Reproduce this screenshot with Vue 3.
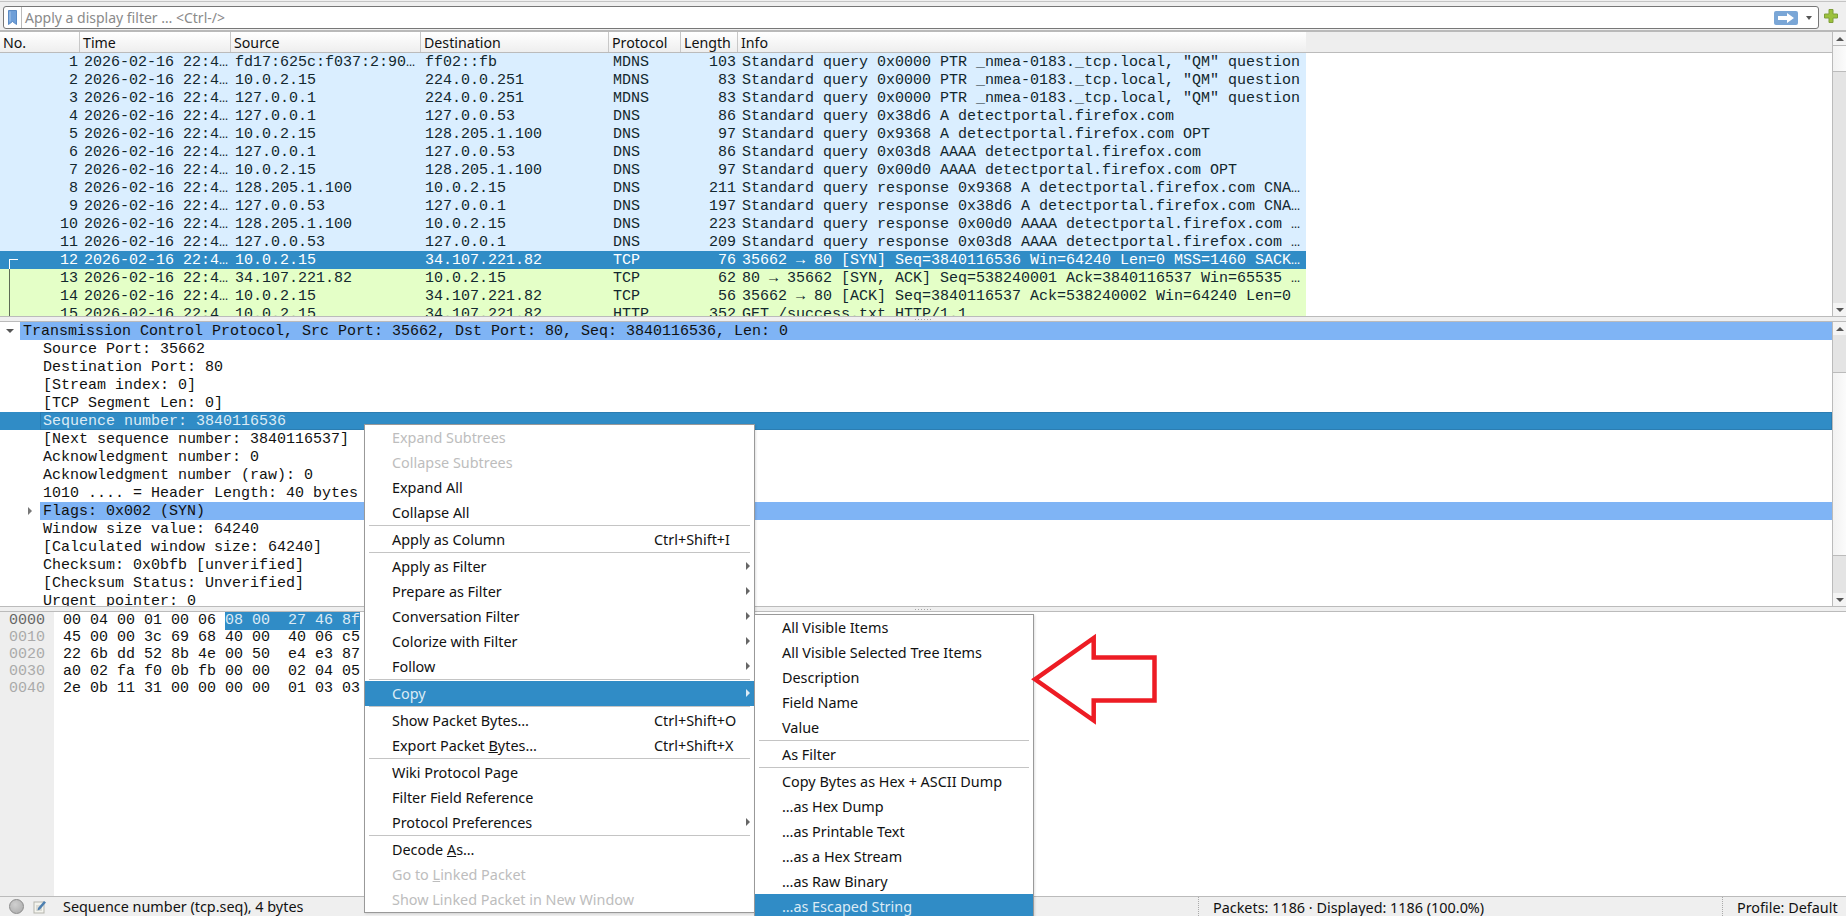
<template>
  <div class="app">
    <!-- filter bar -->
    <div class="filter-bar">
      <div class="filter-input">
        <svg class="bookmark" viewBox="0 0 9 15" width="9" height="15">
          <path d="M0.5 0.5h8v14l-4-3-4 3z" fill="#6f9fd8" stroke="#5a8ac4" stroke-width="1"/>
          <path d="M2 1.5v10" stroke="#a9c7ea" stroke-width="1"/>
        </svg>
        <span class="filter-sep"></span>
        <span class="placeholder">Apply a display filter … &lt;Ctrl-/&gt;</span>
        <span class="apply-btn">
          <svg viewBox="0 0 16 10" width="16" height="10">
            <path d="M0 3h9V0l7 5-7 5V7H0z" fill="#fff"/>
          </svg>
        </span>
        <span class="drop-arrow"></span>
      </div>
      <svg class="plus" viewBox="0 0 14 14" width="14" height="14">
        <path d="M5 .5h4v4.500h4.500v4H9v4.500H5V9H.5V5H5z" fill="#9cc13c" stroke="#7f9f3a" stroke-width="1"/>
      </svg>
    </div>

    <!-- packet list -->
    <div class="pane packets">
      <div class="pane-body">
        <div class="packet-head">
          <div class="head-cols">
            <div v-for="c in columns" :key="c" class="head-cell">{{ c }}</div>
          </div>
        </div>
        <div
          v-for="p in packets"
          :key="p.no"
          class="packet-row"
          :class="p.cls"
        >
          <div class="cell num">{{ p.no }}</div>
          <div class="cell">{{ time }}</div>
          <div class="cell">{{ p.src }}</div>
          <div class="cell">{{ p.dst }}</div>
          <div class="cell">{{ p.proto }}</div>
          <div class="cell len">{{ p.len }}</div>
          <div class="cell">{{ p.info }}</div>
        </div>
        <span class="conv-corner"></span>
        <span class="conv-line"></span>
      </div>
      <div class="scrollbar">
        <span class="sb-btn"><i class="tri-up"></i></span>
        <span class="sb-thumb thumb-top"></span>
        <span class="sb-trough"></span>
        <span class="sb-btn"><i class="tri-down"></i></span>
      </div>
    </div>

    <div class="splitter"><span class="grip"></span></div>

    <!-- packet details -->
    <div class="pane tree">
      <div class="pane-body">
        <div
          v-for="(r, i) in treeRows"
          :key="i"
          class="tree-row"
          :class="{ selected: r.selected }"
        >
          <span class="indent" :class="r.level ? 'lv1' : 'lv0'">
            <i v-if="r.open" class="twist-open"></i>
            <i v-if="r.closed" class="twist-closed"></i>
          </span>
          <span class="tree-label" :class="{ related: r.related }">{{ r.text }}</span>
        </div>
      </div>
      <div class="scrollbar">
        <span class="sb-btn"><i class="tri-up"></i></span>
        <span class="sb-trough short"></span>
        <span class="sb-thumb thumb-mid"></span>
        <span class="sb-trough short"></span>
        <span class="sb-btn"><i class="tri-down"></i></span>
      </div>
    </div>

    <div class="splitter"><span class="grip"></span></div>

    <!-- hex dump -->
    <div class="hex">
      <div class="hex-offsets">
        <div v-for="(h, i) in hexRows" :key="h.off" class="hex-off" :class="{ first: i === 0 }">{{ h.off }}</div>
      </div>
      <div class="hex-bytes">
        <div v-for="h in hexRows" :key="h.off" class="hex-line"><span>{{ h.a }}</span><span :class="{ 'hex-sel': h.sel }">{{ h.b }}</span></div>
      </div>
    </div>

    <!-- status bar -->
    <div class="statusbar">
      <span class="led"></span>
      <svg class="note" viewBox="0 0 14 15" width="14" height="15">
        <rect x="1" y="3" width="10" height="11" fill="#f4f4ee" stroke="#b5b5ad"/>
        <path d="M3 7h6M3 9h6M3 11h6" stroke="#c4c4bc"/>
        <path d="M5 9l6-7 2 1.500-6 7-2.500 1z" fill="#4d7fb0"/>
      </svg>
      <span class="status-text">Sequence number (tcp.seq), 4 bytes</span>
      <span class="status-stats">Packets: 1186 · Displayed: 1186 (100.0%)</span>
      <span class="status-profile">Profile: Default</span>
    </div>

    <!-- context menu -->
    <div class="menu main-menu">
      <template v-for="(m, i) in mainMenu" :key="i">
        <div v-if="m.sep" class="menu-sep"></div>
        <div v-else class="menu-item" :class="{ off: m.off, active: m.active }">
          <span class="menu-label">{{ m.t }}<u v-if="m.u">{{ m.u }}</u>{{ m.r }}</span>
          <span v-if="m.key" class="menu-key">{{ m.key }}</span>
          <i v-if="m.sub" class="menu-arrow"></i>
        </div>
      </template>
    </div>

    <div class="menu copy-menu">
      <template v-for="(m, i) in copyMenu" :key="i">
        <div v-if="m.sep" class="menu-sep"></div>
        <div v-else class="menu-item" :class="{ active: m.active }">
          <span class="menu-label">{{ m.t }}</span>
        </div>
      </template>
    </div>

    <!-- annotation -->
    <svg class="red-arrow" viewBox="0 0 132 94" width="132" height="94">
      <path d="M6 48.300L64.700 7V26.500H125.500V69.500H64.700V89.500z" fill="none" stroke="#ed1c24" stroke-width="4.500"/>
    </svg>
  </div>
</template>

<script setup>
const time = '2026-02-16 22:4…'
const columns = ['No.', 'Time', 'Source', 'Destination', 'Protocol', 'Length', 'Info']

const nmea = 'Standard query 0x0000 PTR _nmea-0183._tcp.local, "QM" question'

const packets = [
  { no: 1, src: 'fd17:625c:f037:2:90…', dst: 'ff02::fb', proto: 'MDNS', len: 103, info: nmea, cls: 'udp' },
  { no: 2, src: '10.0.2.15', dst: '224.0.0.251', proto: 'MDNS', len: 83, info: nmea, cls: 'udp' },
  { no: 3, src: '127.0.0.1', dst: '224.0.0.251', proto: 'MDNS', len: 83, info: nmea, cls: 'udp' },
  { no: 4, src: '127.0.0.1', dst: '127.0.0.53', proto: 'DNS', len: 86, info: 'Standard query 0x38d6 A detectportal.firefox.com', cls: 'udp' },
  { no: 5, src: '10.0.2.15', dst: '128.205.1.100', proto: 'DNS', len: 97, info: 'Standard query 0x9368 A detectportal.firefox.com OPT', cls: 'udp' },
  { no: 6, src: '127.0.0.1', dst: '127.0.0.53', proto: 'DNS', len: 86, info: 'Standard query 0x03d8 AAAA detectportal.firefox.com', cls: 'udp' },
  { no: 7, src: '10.0.2.15', dst: '128.205.1.100', proto: 'DNS', len: 97, info: 'Standard query 0x00d0 AAAA detectportal.firefox.com OPT', cls: 'udp' },
  { no: 8, src: '128.205.1.100', dst: '10.0.2.15', proto: 'DNS', len: 211, info: 'Standard query response 0x9368 A detectportal.firefox.com CNA…', cls: 'udp' },
  { no: 9, src: '127.0.0.53', dst: '127.0.0.1', proto: 'DNS', len: 197, info: 'Standard query response 0x38d6 A detectportal.firefox.com CNA…', cls: 'udp' },
  { no: 10, src: '128.205.1.100', dst: '10.0.2.15', proto: 'DNS', len: 223, info: 'Standard query response 0x00d0 AAAA detectportal.firefox.com …', cls: 'udp' },
  { no: 11, src: '127.0.0.53', dst: '127.0.0.1', proto: 'DNS', len: 209, info: 'Standard query response 0x03d8 AAAA detectportal.firefox.com …', cls: 'udp' },
  { no: 12, src: '10.0.2.15', dst: '34.107.221.82', proto: 'TCP', len: 76, info: '35662 → 80 [SYN] Seq=3840116536 Win=64240 Len=0 MSS=1460 SACK…', cls: 'sel' },
  { no: 13, src: '34.107.221.82', dst: '10.0.2.15', proto: 'TCP', len: 62, info: '80 → 35662 [SYN, ACK] Seq=538240001 Ack=3840116537 Win=65535 …', cls: 'http' },
  { no: 14, src: '10.0.2.15', dst: '34.107.221.82', proto: 'TCP', len: 56, info: '35662 → 80 [ACK] Seq=3840116537 Ack=538240002 Win=64240 Len=0', cls: 'http' },
  { no: 15, src: '10.0.2.15', dst: '34.107.221.82', proto: 'HTTP', len: 352, info: 'GET /success.txt HTTP/1.1', cls: 'http' }
]

const treeRows = [
  { level: 0, open: true, related: true, text: 'Transmission Control Protocol, Src Port: 35662, Dst Port: 80, Seq: 3840116536, Len: 0' },
  { level: 1, text: 'Source Port: 35662' },
  { level: 1, text: 'Destination Port: 80' },
  { level: 1, text: '[Stream index: 0]' },
  { level: 1, text: '[TCP Segment Len: 0]' },
  { level: 1, selected: true, text: 'Sequence number: 3840116536' },
  { level: 1, text: '[Next sequence number: 3840116537]' },
  { level: 1, text: 'Acknowledgment number: 0' },
  { level: 1, text: 'Acknowledgment number (raw): 0' },
  { level: 1, text: '1010 .... = Header Length: 40 bytes' },
  { level: 1, closed: true, related: true, text: 'Flags: 0x002 (SYN)' },
  { level: 1, text: 'Window size value: 64240' },
  { level: 1, text: '[Calculated window size: 64240]' },
  { level: 1, text: 'Checksum: 0x0bfb [unverified]' },
  { level: 1, text: '[Checksum Status: Unverified]' },
  { level: 1, text: 'Urgent pointer: 0' }
]

const hexRows = [
  { off: '0000', a: '00 04 00 01 00 06 ', b: '08 00  27 46 8f', sel: true },
  { off: '0010', a: '45 00 00 3c 69 68 ', b: '40 00  40 06 c5' },
  { off: '0020', a: '22 6b dd 52 8b 4e ', b: '00 50  e4 e3 87' },
  { off: '0030', a: 'a0 02 fa f0 0b fb ', b: '00 00  02 04 05' },
  { off: '0040', a: '2e 0b 11 31 00 00 ', b: '00 00  01 03 03' }
]

const mainMenu = [
  { t: 'Expand Subtrees', off: true },
  { t: 'Collapse Subtrees', off: true },
  { t: 'Expand All' },
  { t: 'Collapse All' },
  { sep: true },
  { t: 'Apply as Column', key: 'Ctrl+Shift+I' },
  { sep: true },
  { t: 'Apply as Filter', sub: true },
  { t: 'Prepare as Filter', sub: true },
  { t: 'Conversation Filter', sub: true },
  { t: 'Colorize with Filter', sub: true },
  { t: 'Follow', sub: true },
  { sep: true },
  { t: 'Copy', sub: true, active: true },
  { sep: true },
  { t: 'Show Packet Bytes…', key: 'Ctrl+Shift+O' },
  { t: 'Export Packet ', u: 'B', r: 'ytes…', key: 'Ctrl+Shift+X' },
  { sep: true },
  { t: 'Wiki Protocol Page' },
  { t: 'Filter Field Reference' },
  { t: 'Protocol Preferences', sub: true },
  { sep: true },
  { t: 'Decode ', u: 'A', r: 's…' },
  { t: 'Go to ', u: 'L', r: 'inked Packet', off: true },
  { t: 'Show Linked Packet in New Window', off: true }
]

const copyMenu = [
  { t: 'All Visible Items' },
  { t: 'All Visible Selected Tree Items' },
  { t: 'Description' },
  { t: 'Field Name' },
  { t: 'Value' },
  { sep: true },
  { t: 'As Filter' },
  { sep: true },
  { t: 'Copy Bytes as Hex + ASCII Dump' },
  { t: '…as Hex Dump' },
  { t: '…as Printable Text' },
  { t: '…as a Hex Stream' },
  { t: '…as Raw Binary' },
  { t: '…as Escaped String', active: true }
]
</script>

<style>
html, body {
  margin: 0;
  overflow: hidden;
  background: #fff;
}
</style>

<style scoped>
.app {
  position: relative;
  width: 1846px;
  height: 916px;
  display: flex;
  flex-direction: column;
  overflow: hidden;
  background: #efefef;
  font-family: "Noto Sans", sans-serif;
  font-size: 14.4px;
  color: #111;
}

/* filter bar */
.filter-bar {
  height: 28px;
  flex-shrink: 0;
  margin-top: 1px;
  border-top: 1px solid #c4c4c4;
  border-bottom: 2px solid #b9b9b9;
  padding-left: 3px;
  display: flex;
  align-items: flex-start;
}

.filter-input {
  width: 1814px;
  height: 21px;
  margin-top: 4px;
  background: #fff;
  border: 1px solid #777;
  border-radius: 3px;
  display: flex;
  align-items: center;
  flex-shrink: 0;
}

.bookmark {
  margin-left: 4px;
  flex-shrink: 0;
}

.filter-sep {
  width: 1px;
  height: 21px;
  margin-left: 4px;
  background: #bbb;
}

.placeholder {
  margin-left: 3px;
  color: #8a8a8a;
  font-size: 14px;
  flex: 1;
}

.apply-btn {
  width: 24px;
  height: 14px;
  background: #7aa6d6;
  border-radius: 2px;
  display: flex;
  align-items: center;
  justify-content: center;
}

.drop-arrow {
  width: 0;
  height: 0;
  margin: 0 6px 0 8px;
  border-left: 3.5px solid transparent;
  border-right: 3.5px solid transparent;
  border-top: 4px solid #555;
}

.plus {
  margin: 7px 0 0 5px;
}

/* panes */
.pane {
  height: 284px;
  flex-shrink: 0;
  display: flex;
  background: #fff;
  overflow: hidden;
}

.pane-body {
  position: relative;
  flex: 1;
  min-width: 0;
  overflow: hidden;
  font-family: "Liberation Mono", monospace;
  font-size: 15px;
  line-height: 18px;
}

.splitter {
  height: 4px;
  flex-shrink: 0;
  border-top: 1px solid #bbb;
  border-bottom: 1px solid #bbb;
  display: flex;
  align-items: center;
  justify-content: center;
}

.grip {
  width: 16px;
  height: 1px;
  margin-left: -1px;
  background: repeating-linear-gradient(90deg, #a5a5a5 0 1px, transparent 1px 3px);
}

/* packet list */
.packet-head {
  height: 20px;
  background: #eee;
  border-bottom: 1px solid #bbb;
}

.head-cols,
.packet-row {
  display: grid;
  grid-template-columns: 80px 151px 190px 188px 72px 57px 568px;
  width: 1306px;
}

.head-cols {
  height: 20px;
  background: linear-gradient(#fff, #eee);
}

.head-cell {
  height: 20px;
  padding-left: 3px;
  border-right: 1px solid #c8c8c8;
  font-family: "Noto Sans", sans-serif;
  font-size: 14.2px;
  line-height: 22px;
  color: #111;
  overflow: hidden;
  white-space: nowrap;
}

.head-cell:last-child {
  border-right: none;
}

.packet-row {
  height: 18px;
  color: #12272e;
}

.packet-row.udp {
  background: #daeeff;
}

.packet-row.http {
  background: #e4ffc7;
}

.packet-row.sel {
  background: #308cc6;
  color: #fff;
}

.cell {
  height: 18px;
  box-sizing: border-box;
  padding-top: 1px;
  padding-left: 4px;
  white-space: pre;
  overflow: hidden;
}

.cell.num,
.cell.len {
  padding-left: 0;
  padding-right: 2px;
  text-align: right;
}

.conv-corner {
  position: absolute;
  left: 9px;
  top: 227px;
  width: 9px;
  height: 1px;
  background: #fff;
}

.conv-corner::after {
  content: "";
  position: absolute;
  left: 0;
  top: 0;
  width: 1px;
  height: 10px;
  background: #fff;
}

.conv-line {
  position: absolute;
  left: 9px;
  top: 237px;
  width: 1px;
  height: 47px;
  background: #5d6b55;
}

/* scrollbars */
.scrollbar {
  width: 13px;
  flex-shrink: 0;
  border-left: 1px solid #bbb;
  display: flex;
  flex-direction: column;
  background: #e4e4e4;
}

.sb-btn {
  height: 13px;
  flex-shrink: 0;
  background: #f4f4f4;
  display: flex;
  align-items: center;
  justify-content: center;
}

.tri-up,
.tri-down {
  width: 0;
  height: 0;
  border-left: 4px solid transparent;
  border-right: 4px solid transparent;
}

.tri-up {
  border-bottom: 4px solid #555;
}

.tri-down {
  border-top: 4px solid #555;
}

.sb-thumb {
  background: linear-gradient(90deg, #f2f2f2, #fbfbfb);
  border-top: 1px solid #bbb;
  border-bottom: 1px solid #bbb;
  box-sizing: border-box;
}

.thumb-top {
  height: 27px;
}

.thumb-mid {
  flex: 1;
}

.sb-trough {
  flex: 1;
  background: #e4e4e4;
}

.sb-trough.short {
  flex: 0 0 37px;
}

/* detail tree */
.tree-row {
  height: 18px;
  display: flex;
  color: #111;
  white-space: pre;
}

.tree-row.selected {
  background: #308cc6;
  color: #dcebf5;
}

.tree-row.selected .tree-label {
  box-shadow: inset 0 0 0 1px #2b7db2;
}

.indent {
  position: relative;
  flex-shrink: 0;
}

.indent.lv0 {
  width: 20px;
}

.indent.lv1 {
  width: 40px;
}

.twist-open {
  position: absolute;
  left: 6px;
  top: 7px;
  border-left: 4px solid transparent;
  border-right: 4px solid transparent;
  border-top: 4px solid #555;
}

.twist-closed {
  position: absolute;
  left: 28px;
  top: 5px;
  border-top: 4px solid transparent;
  border-bottom: 4px solid transparent;
  border-left: 4px solid #777;
}

.tree-label {
  flex: 1;
  height: 18px;
  padding-left: 3px;
  line-height: 20px;
  overflow: hidden;
}

.tree-label.related {
  background: #7fb4f5;
}

/* hex */
.hex {
  flex: 1;
  min-height: 0;
  display: flex;
  background: #fff;
  font-family: "Liberation Mono", monospace;
  font-size: 15px;
  line-height: 17px;
}

.hex-offsets {
  width: 45px;
  padding-left: 9px;
  background: #eee;
  color: #aaa;
}

.hex-off.first {
  color: #666;
}

.hex-bytes {
  padding-left: 9px;
  color: #111;
  white-space: pre;
}

.hex-line {
  height: 17px;
}

.hex-sel {
  display: inline-block;
  height: 18px;
  background: #308cc6;
  color: #dcebf5;
}

/* status bar */
.statusbar {
  height: 19px;
  flex-shrink: 0;
  border-top: 1px solid #bbb;
  display: flex;
  align-items: center;
  line-height: 21px;
}

.led {
  width: 13px;
  height: 13px;
  margin-left: 9px;
  border: 1px solid #8a8a8a;
  border-radius: 50%;
  background: radial-gradient(circle at 40% 35%, #d0d0d0, #a8a8a8);
}

.note {
  margin-left: 9px;
}

.status-text {
  margin-left: 16px;
  flex: 1;
}

.status-stats,
.status-profile {
  height: 19px;
  padding-left: 14px;
  box-sizing: border-box;
  border-left: 1px dotted #aaa;
}

.status-stats {
  width: 524px;
}

.status-profile {
  width: 124px;
}

/* context menus */
.menu {
  position: absolute;
  background: #fff;
  border: 1px solid #999;
  box-shadow: 1px 1px 2px rgba(0, 0, 0, 0.12);
}

.main-menu {
  left: 364px;
  top: 424px;
  width: 389px;
}

.copy-menu {
  left: 754px;
  top: 614px;
  width: 278px;
}

.menu-item {
  position: relative;
  height: 25px;
  padding-left: 27px;
  display: flex;
  align-items: center;
  white-space: pre;
  color: #111;
  line-height: 25px;
}

.menu-item.off {
  color: #bdbdbd;
}

.menu-item.active {
  background: #308cc6;
  color: #dcebf5;
}

.menu-key {
  position: absolute;
  left: 289px;
}

.menu-arrow {
  position: absolute;
  right: 4px;
  top: 8px;
  border-top: 4px solid transparent;
  border-bottom: 4px solid transparent;
  border-left: 4px solid #666;
}

.menu-item.active .menu-arrow {
  border-left-color: #dcebf5;
}

.menu-sep {
  height: 2px;
  margin: 0 4px;
  box-sizing: border-box;
  border-top: 1px solid #c4c4c4;
}

.red-arrow {
  position: absolute;
  left: 1029px;
  top: 631px;
}
</style>
